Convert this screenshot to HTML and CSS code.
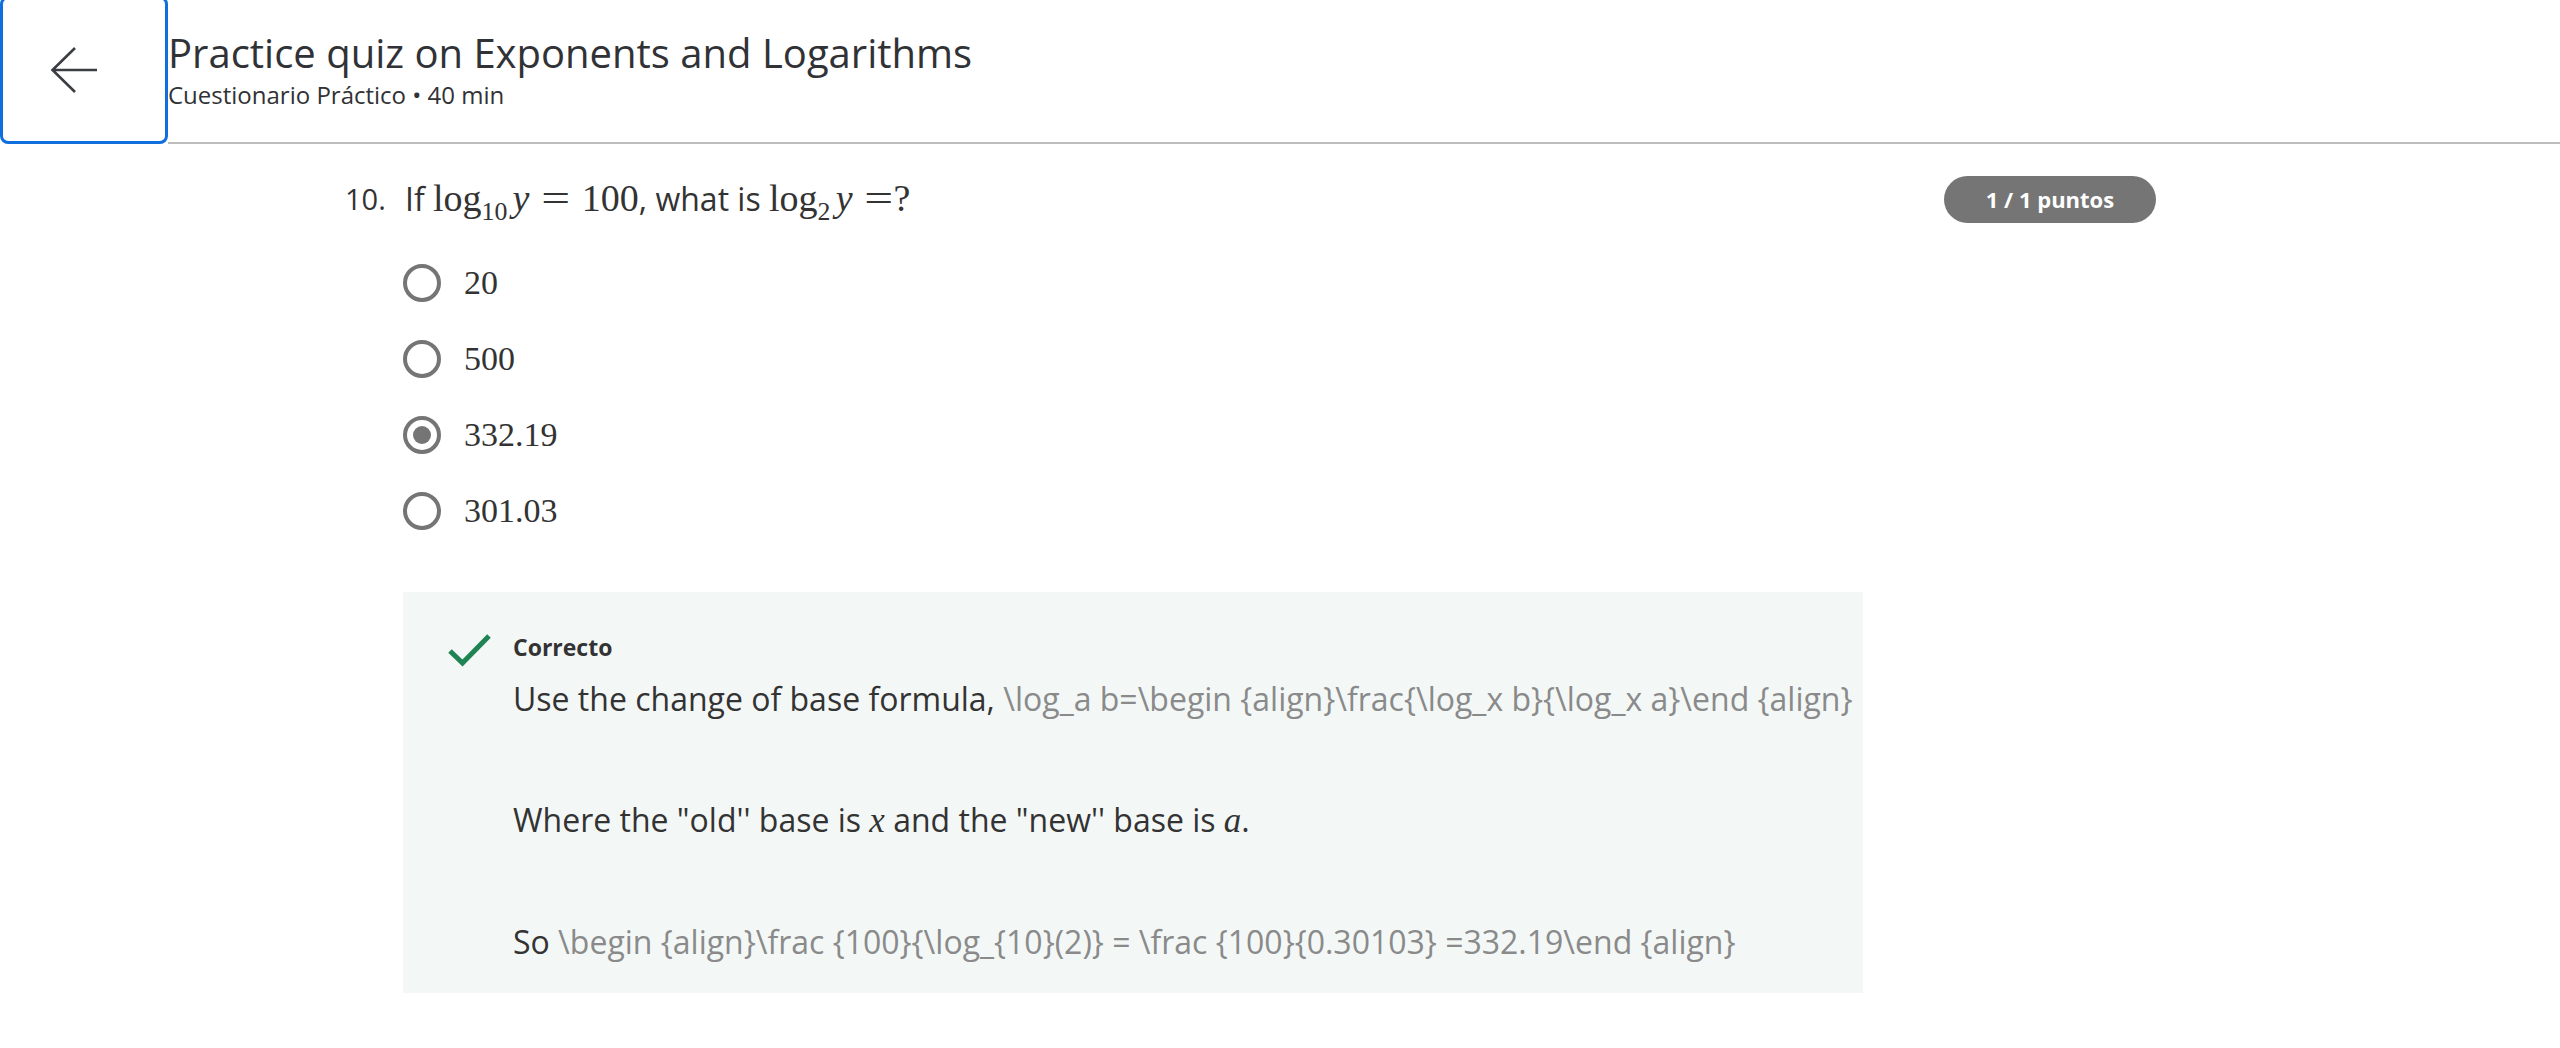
FILE: index.html
```html
<!DOCTYPE html>
<html lang="es">
<head>
<meta charset="utf-8">
<title>Practice quiz on Exponents and Logarithms</title>
<link rel="stylesheet" href="styles.css">
</head>
<body>
<header class="topbar">
  <button class="back" aria-label="Back">
    <svg class="back-icon" width="48" height="46" viewBox="0 0 48 46" aria-hidden="true">
      <path d="M47 23 H2.5 M25 1 L2.5 23 L25 45" fill="none" stroke="#3a3d42" stroke-width="2.6" stroke-linejoin="miter"/>
    </svg>
  </button>
  <div class="heading">
    <h1 class="title">Practice quiz on Exponents and Logarithms</h1>
    <div class="meta">Cuestionario Práctico • 40 min</div>
  </div>
</header>

<main class="quiz">
  <div class="q-head">
    <span class="q-num">10.</span>
    <div class="q-text">If <span class="m">log<sub class="sub">10</sub><i class="var">y</i><span class="rel">=</span>100</span>, what is <span class="m">log<sub class="sub">2</sub><i class="var">y</i><span class="rel rel-close">=</span>?</span></div>
    <span class="badge">1 / 1 puntos</span>
  </div>

  <div class="q-body">
    <ul class="options">
      <li class="option"><span class="radio"></span><span class="opt-text">20</span></li>
      <li class="option"><span class="radio"></span><span class="opt-text">500</span></li>
      <li class="option"><span class="radio checked"></span><span class="opt-text">332.19</span></li>
      <li class="option"><span class="radio"></span><span class="opt-text">301.03</span></li>
    </ul>

    <section class="feedback">
      <svg class="check" width="44" height="36" viewBox="0 0 44 36" aria-hidden="true">
        <path d="M3 19 L15.5 31 L42 4" fill="none" stroke="#1f8354" stroke-width="5"/>
      </svg>
      <div class="fb-content">
        <div class="fb-title">Correcto</div>
        <p class="fb-line">Use the change of base formula, <span class="tex">\log_a b=\begin {align}\frac{\log_x b}{\log_x a}\end {align}</span></p>
        <p class="fb-line">Where the "old'' base is <i class="var">x</i> and the "new'' base is <i class="var">a</i>.</p>
        <p class="fb-line">So <span class="tex">\begin {align}\frac {100}{\log_{10}(2)} = \frac {100}{0.30103} =332.19\end {align}</span></p>
      </div>
    </section>
  </div>
</main>
</body>
</html>
```

FILE: styles.css
```css
html, body {
  margin: 0;
  padding: 0;
  background: #ffffff;
}

body {
  font-family: "Open Sans", "Noto Sans", sans-serif;
  color: #333333;
}

/* ---------- header ---------- */
.topbar {
  display: flex;
  align-items: flex-start;
  height: 144px;
}

.back {
  flex: 0 0 auto;
  box-sizing: border-box;
  width: 168px;
  height: 148px;
  margin-top: -4px;
  padding: 0 20px 0 0;
  border: 3px solid #0f6fde;
  border-radius: 8px;
  background: #ffffff;
  display: flex;
  align-items: center;
  justify-content: center;
}

.back-icon {
  display: block;
}

.heading {
  flex: 1 1 auto;
  box-sizing: border-box;
  height: 144px;
  padding-top: 28px;
  border-bottom: 2px solid #bdbdbd;
}

.title {
  margin: 0;
  font-size: 40px;
  line-height: 50px;
  font-weight: 400;
  color: #303236;
}

.meta {
  margin-top: 1px;
  font-size: 24px;
  line-height: 32px;
  color: #303236;
}

/* ---------- question ---------- */
.quiz {
  margin-left: 345px;
  width: 1811px;
}

.q-head {
  display: flex;
  align-items: center;
  padding-top: 34px;
  height: 42px;
}

.q-num {
  flex: 0 0 60px;
  font-size: 29px;
  line-height: 42px;
  color: #333333;
}

.q-text {
  flex: 1 1 auto;
  font-size: 32px;
  line-height: 42px;
  color: #333333;
  white-space: nowrap;
}

.m {
  font-family: "Liberation Serif", "Times New Roman", serif;
  font-size: 38px;
  line-height: 1;
}

.sub {
  font-size: 0.68em;
  line-height: 0;
  vertical-align: -0.36em;
  margin-right: 0.2em;
}

.var {
  font-family: "Liberation Serif", "Times New Roman", serif;
  font-style: italic;
}

.rel {
  display: inline-block;
  width: 0.78em;
  margin: 0 0.3em;
  text-align: center;
  transform: scaleX(1.35);
}

.rel-close {
  margin-right: 0;
}

.badge {
  flex: 0 0 auto;
  box-sizing: border-box;
  width: 212px;
  height: 47px;
  border-radius: 24px;
  background: #757575;
  color: #ffffff;
  font-size: 22px;
  font-weight: 700;
  line-height: 47px;
  text-align: center;
}

/* ---------- options ---------- */
.q-body {
  padding-left: 58px;
}

.options {
  list-style: none;
  margin: 25px 0 0 0;
  padding: 0;
}

.option {
  display: flex;
  align-items: center;
  height: 76px;
}

.radio {
  flex: 0 0 auto;
  box-sizing: border-box;
  width: 38px;
  height: 38px;
  border: 4px solid #757575;
  border-radius: 50%;
  display: flex;
  align-items: center;
  justify-content: center;
}

.radio.checked::after {
  content: "";
  width: 18px;
  height: 18px;
  border-radius: 50%;
  background: #757575;
}

.opt-text {
  margin-left: 23px;
  font-family: "Liberation Serif", "Times New Roman", serif;
  font-size: 34px;
  line-height: 40px;
  color: #333333;
}

/* ---------- feedback ---------- */
.feedback {
  box-sizing: border-box;
  width: 1460px;
  height: 401px;
  margin-top: 43px;
  padding: 40px 0 0 44px;
  background: #f3f8f7;
  display: flex;
  align-items: flex-start;
  gap: 22px;
}

.check {
  flex: 0 0 auto;
  display: block;
}

.fb-content {
  flex: 1 1 auto;
}

.fb-title {
  font-size: 23px;
  font-weight: 700;
  line-height: 30px;
  color: #333333;
}

.fb-line {
  margin: 14px 0 0 0;
  font-size: 32px;
  line-height: 45px;
  color: #333333;
  white-space: nowrap;
}

.fb-line + .fb-line {
  margin-top: 76px;
}

.fb-line .var {
  font-size: 35px;
}

.tex {
  color: #8a8a8a;
}
```
